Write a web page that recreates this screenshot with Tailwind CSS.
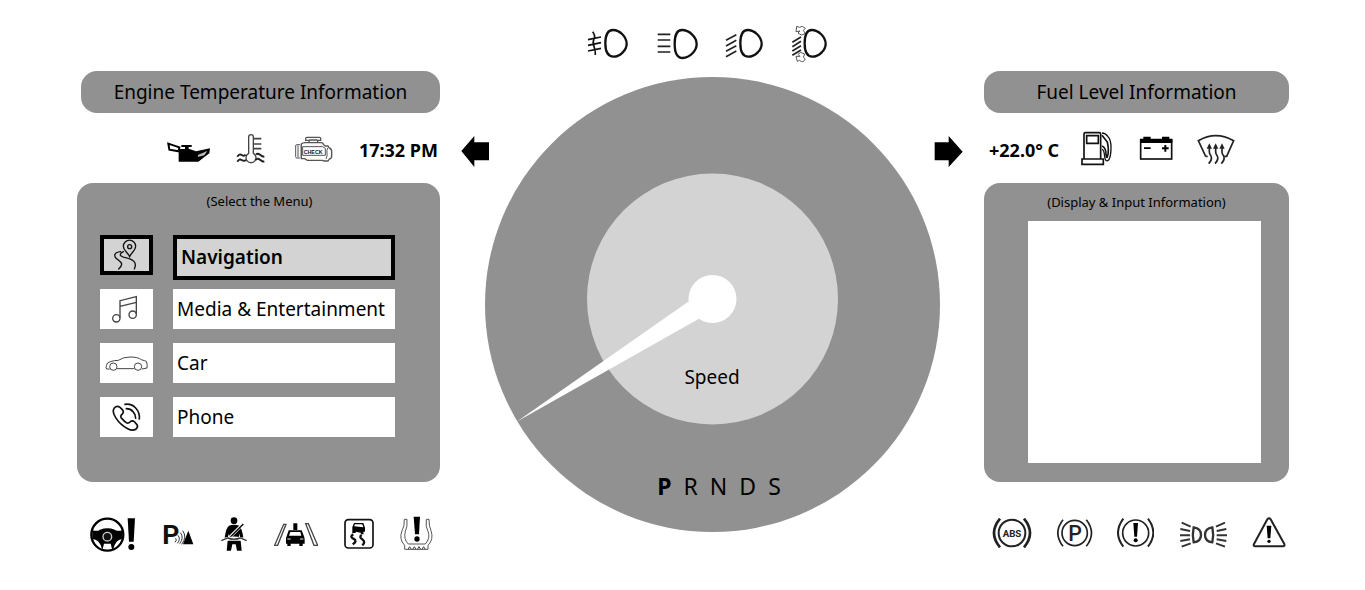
<!DOCTYPE html>
<html lang="en">
<head>
  <meta charset="UTF-8" />
  <meta name="viewport" content="width=device-width, initial-scale=1.0" />
  <title>Instrument Cluster</title>
  <script src="https://cdn.jsdelivr.net/npm/@tailwindcss/browser@4"></script>
</head>
<body class="bg-white text-black font-['Noto_Sans','Open_Sans',sans-serif]">

  <main class="grid grid-cols-[363fr_544fr_305fr] pl-[77px] pr-[76px]">

    <!-- Left: engine info and menu -->
    <section class="pt-[71px]">
      <h2 class="ml-1 h-[42px] rounded-2xl bg-[#919191] flex items-center justify-center text-[19px]">Engine Temperature Information</h2>

      <div class="h-[70px] flex items-center justify-end gap-6 pr-0.5">
        <!-- oil -->
        <svg class="w-11 h-[34px]" viewBox="291 213 132 102">
          <path d="M326 267 H345 V261 H334 V255 H365 V261 H356 V266 L378 274 L420 265 L418 280 L385 305 H326Z" />
          <path d="M295 251 L328 262 L326 274 L298 269Z" fill="#fff" stroke="#000" stroke-width="6" />
          <path d="M385 284 L412 273 L403 286 L383 291Z" fill="#bbb" />
        </svg>
        <!-- coolant -->
        <svg class="w-[35px] h-[34px]" viewBox="495 213 105 102" fill="none" stroke="#444" stroke-width="4">
          <path d="M536 280 V231 a7 7 0 0 1 14 0 V280 a15 15 0 1 1 -14 0Z" />
          <path d="M552 236 h22 M552 252 h22 M552 266 h22" stroke-width="5" />
          <path d="M502 290 q6 -10 13 -5 t12 -1 M502 305 q6 -10 13 -5 t14 0 M558 284 q5 -6 12 0 t13 6 M556 300 q7 -7 14 -1 t13 6" stroke="#222" stroke-width="6" />
        </svg>
        <!-- check engine -->
        <svg class="w-[41px] h-[34px]" viewBox="672 213 123 102" fill="none" stroke="#555" stroke-width="4">
          <path d="M707 235 q0 -3 4 -3 H748 q4 0 4 3 v6 h-9 v7 h-26 v-7 h-10Z M718 240 h24 M694 252 q3 -4 12 -4 H754 q5 0 7 6 l5 4 h8 l4 6 q7 2 7 10 v14 q0 8 -7 9 l-4 6 h-12 l-4 -2 H712 l-8 -5 h-10Z" />
          <path d="M690 254 h-10 q-3 0 -3 4 v32 q0 4 3 4 h10 M684 256 v36 M694 254 v40 M698 260 H758 L766 265 V286 H698Z M774 263 q-5 8 -3 16 q2 8 -3 18" stroke-width="3" />
          <text x="701" y="281" font-size="16" font-weight="700" fill="#111" stroke="none" font-family="Liberation Sans, sans-serif">CHECK</text>
        </svg>
        <p class="pt-1 text-[18px] font-bold">17:32 PM</p>
      </div>

      <nav class="min-h-[299px] rounded-2xl bg-[#919191] pl-[23px] pr-[45px] pt-2">
        <p class="text-[13px] leading-5 text-center pl-6">(Select the Menu)</p>
        <ul class="mt-6 flex flex-col gap-[14px] text-[19px]">
          <li class="h-10">
            <button type="button" class="w-full flex items-start gap-5 text-left font-semibold">
              <span class="w-[53px] h-10 border-4 border-black bg-[#d3d3d3] flex items-center justify-center">
                <svg class="w-8 h-8" viewBox="124 176 96 96" fill="none" stroke="#111" stroke-width="4" stroke-linecap="round">
                  <path d="M180 229 C174 215 161 211 161 198 a18 18 0 0 1 37 0 C198 211 186 215 180 229Z" />
                  <circle cx="180" cy="199" r="6" />
                  <path d="M147 266 C164 250 154 246 142 236 C130 226 134 216 153 214 M161 214 C146 222 150 228 168 232 C192 238 203 246 194 266" />
                </svg>
              </span>
              <span class="flex-1 h-[45px] border-4 border-black bg-[#d3d3d3] flex items-center pl-1">Navigation</span>
            </button>
          </li>
          <li class="h-10">
            <button type="button" class="w-full flex items-start gap-5 text-left">
              <span class="w-[53px] h-10 bg-white flex items-center justify-center">
                <svg class="w-8 h-8" viewBox="122 338 96 96" fill="none" stroke="#444" stroke-width="4">
                  <path d="M149 412 V361 L198 349 V401 M149 378 L198 366" />
                  <circle cx="138" cy="414" r="11" />
                  <circle cx="187" cy="403" r="11" />
                </svg>
              </span>
              <span class="flex-1 h-10 bg-white flex items-center pl-1">Media &amp; Entertainment</span>
            </button>
          </li>
          <li class="h-10">
            <button type="button" class="w-full flex items-start gap-5 text-left">
              <span class="w-[53px] h-10 bg-white flex items-center justify-center">
                <svg class="w-11 h-8" viewBox="105 52 132 96" fill="none" stroke="#444" stroke-width="3">
                  <path d="M119 118 H110 q-3 -4 -1 -10 q1 -10 12 -12 q12 -4 24 -4 q14 -10 35 -10 q24 0 34 8 q10 3 15 5 q4 8 2 20 l-15 3 M141 117 H193" />
                  <circle cx="130" cy="111" r="11" />
                  <circle cx="204" cy="111" r="11" />
                </svg>
              </span>
              <span class="flex-1 h-10 bg-white flex items-center pl-1">Car</span>
            </button>
          </li>
          <li class="h-10">
            <button type="button" class="w-full flex items-start gap-5 text-left">
              <span class="w-[53px] h-10 bg-white flex items-center justify-center">
                <svg class="w-8 h-8" viewBox="121 216 96 96" fill="none" stroke="#111" stroke-width="5" stroke-linecap="round" stroke-linejoin="round">
                  <path d="M131 237 q8 -9 17 -2 l7 7 q6 7 0 13 q-8 6 -2 13 q8 9 14 13 q6 3 11 -2 q7 -7 14 0 l6 7 q6 7 -2 14 q-9 7 -25 -1 q-22 -11 -36 -33 q-12 -19 -4 -29Z" />
                  <path d="M163 226 q19 -3 32 11 q13 14 11 33 M167 239 q13 0 20 9 q8 8 8 20" />
                </svg>
              </span>
              <span class="flex-1 h-10 bg-white flex items-center pl-1">Phone</span>
            </button>
          </li>
        </ul>
      </nav>

      <div class="mt-[31px] flex justify-between pl-[13px] pr-[7px]">
        <!-- steering -->
        <svg class="w-[46px] h-10" viewBox="30 24 138 120">
          <circle cx="82" cy="89" r="48" fill="none" stroke="#000" stroke-width="7" />
          <path d="M37 76 Q52 80 60 74 Q82 66 104 74 Q114 80 127 76 V102 Q108 102 100 132 H66 Q58 102 37 102Z" />
          <path d="M72 116 h20 l4 16 h-28Z" fill="#fff" />
          <circle cx="82" cy="95" r="13" fill="#111" stroke="#ccc" stroke-width="4" />
          <path d="M143 40 H165 L161 110 H147Z" />
          <circle cx="154" cy="126" r="9" />
        </svg>
        <!-- park assist -->
        <svg class="w-8 h-10" viewBox="246 24 96 120" fill="none" stroke="#333" stroke-width="3">
          <text x="247" y="117" font-size="80" font-weight="700" fill="#111" stroke="none" font-family="Liberation Sans Narrow, Roboto, sans-serif">P</text>
          <path d="M287 100 q5 5 -2 12 M294 91 q9 11 -2 24 M301 83 q12 15 -2 33 M308 77 q14 19 -3 41" />
          <path d="M325 77 L340 118 H309Z" fill="#000" stroke="none" />
        </svg>
        <!-- seat belt -->
        <svg class="w-7 h-10" viewBox="417 24 84 120">
          <circle cx="459" cy="47" r="10" />
          <path d="M444 62 Q459 56 475 62 Q483 70 487 98 L478 98 L475 86 L473 104 H445 L443 86 L440 98 L431 98 Q435 68 444 62Z" />
          <path d="M440 107 H479 L482 137 H468 L464 118 H454 L450 137 H437Z" />
          <path d="M486 57 L442 101" stroke="#fff" stroke-width="9" />
          <path d="M487 57 L446 98" stroke="#000" stroke-width="4" />
          <path d="M421 106 Q459 92 497 106" fill="none" stroke="#fff" stroke-width="9" />
          <path d="M421 107 L440 99 Q459 106 478 99 L497 107" fill="none" stroke="#333" stroke-width="4" />
        </svg>
        <!-- lane assist -->
        <svg class="w-11 h-10" viewBox="48 24 132 120">
          <path d="M77 58 h7 L59 121 h-9Z M143 56 h8 L179 121 h-11Z" fill="#fff" stroke="#444" stroke-width="4" />
          <path d="M106 55 h12 v20 h-12Z M92 76 H131 L138 94 Q140 98 140 106 V116 H134 V123 H124 V116 H98 V123 H88 V116 H84 V100Z" />
          <path d="M97 81 H127 L130 92 H93Z" fill="#fff" />
          <path d="M88 100 h10 v4 h-10Z M126 100 h10 v4 h-10Z" fill="#999" />
        </svg>
        <!-- traction -->
        <svg class="w-[30px] h-10" viewBox="255 24 90 120">
          <rect x="258" y="44" width="84" height="85" rx="10" fill="none" stroke="#111" stroke-width="5" />
          <path d="M285 54 H313 L318 68 V80 H313 L314 88 H306 L305 83 L290 80 V84 H280 V66Z" />
          <path d="M287 58 H310 L313 67 L286 64Z" fill="#fff" />
          <path d="M283 88 q-12 6 0 13 q14 7 -2 17 M308 90 q-9 6 2 13 q11 8 0 18" fill="none" stroke="#111" stroke-width="7" />
        </svg>
        <!-- tyre pressure -->
        <svg class="w-[33px] h-10" viewBox="420 24 99 120">
          <path d="M433 43 h8 q2 24 -5 36 q-6 24 9 38 H496 q16 -18 8 -38 q-8 -12 -5 -36 h8 q0 22 6 34 q9 26 -9 44 V133 H434 V121 q-18 -18 -8 -44 q8 -12 7 -34Z" fill="none" stroke="#555" stroke-width="3" />
          <path d="M444 133 l5 -8 l5 8 M458 133 l5 -8 l5 8 M472 133 l5 -8 l5 8 M486 133 l5 -8 l5 8" fill="none" stroke="#444" stroke-width="3" />
          <path d="M461 35 H480 L477 88 H465Z" />
          <circle cx="471" cy="102" r="8" />
        </svg>
      </div>
    </section>

    <!-- Centre: lamps, indicators, speed dial -->
    <section class="pt-[25px]">
      <div class="flex justify-center gap-[27px] pr-[10px]">
        <svg class="w-[42px] h-10" viewBox="54 30 126 120" fill="none" stroke="#111" stroke-width="7">
          <path d="M132 45 C117 45 109 59 109 85 C109 112 118 125 134 125 C153 125 173 105 173 87 C173 65 152 45 132 45Z" />
          <path d="M57 74 L96 66 M57 91 L96 83 M57 108 L96 100 M71 50 Q80 62 75 72 T75 94 T79 120" stroke-width="5" />
        </svg>
        <svg class="w-[42px] h-10" viewBox="255 30 126 120" fill="none" stroke="#111" stroke-width="7">
          <path d="M333 45 C319 45 311 59 311 86 C311 115 320 129 335 129 C356 129 377 107 377 88 C377 65 354 45 333 45Z" />
          <path d="M260 58 H298 M260 75 H298 M260 94 H298 M260 111 H298" stroke="#222" stroke-width="5" />
        </svg>
        <svg class="w-[38px] h-10" viewBox="462 30 114 120" fill="none" stroke="#111" stroke-width="7">
          <path d="M530 45 C516 45 508 59 508 85 C508 112 517 125 532 125 C552 125 572 105 572 87 C572 65 550 45 530 45Z" />
          <path d="M465 76 L496 59 M465 93 L496 76 M465 109 L496 92 M465 125 L496 108" stroke="#222" stroke-width="5" />
        </svg>
        <svg class="w-[38px] h-10" viewBox="660 30 114 120" fill="none" stroke="#111" stroke-width="7">
          <path d="M667 82 L693 66 M667 95 L693 79 M667 108 L693 92 M667 121 L693 105" stroke="#222" stroke-width="5" />
          <path d="M678 50 L680 34 L688 37 Q697 30 706 40 L700 46 L706 56 L694 60 L684 54 L690 48Z M678 124 L682 139 L689 136 Q699 146 706 132 L700 127 L704 117 L692 112 L684 118 L690 124Z" fill="#fff" stroke="#555" stroke-width="3" />
          <path d="M725 45 C711 45 704 59 704 85 C704 112 712 125 727 125 C747 125 767 105 767 87 C767 65 745 45 725 45Z" />
        </svg>
      </div>

      <div class="mt-3 grid justify-items-center">
        <svg class="[grid-area:1/1] w-[455px]" viewBox="0 0 455 455">
          <circle cx="227.5" cy="227.5" r="227.5" fill="#919191" />
          <circle cx="227.5" cy="222" r="125.5" fill="#d3d3d3" />
          <path d="M32 344.5 L203.5 224.5 L227 222 L213.5 242Z" fill="#fff" />
          <circle cx="227.5" cy="222" r="24" fill="#fff" />
        </svg>
        <div class="[grid-area:1/1] self-end flex flex-col items-center pb-7">
          <p class="text-[19px] leading-7">Speed</p>
          <p class="mt-[77px] ml-[14px] flex gap-3 text-[23px] leading-9"><b>P</b><span>R</span><span>N</span><span>D</span><span>S</span></p>
        </div>
        <div class="[grid-area:1/1] w-full self-start mt-[57px] px-5 flex justify-between">
          <svg class="w-[30px] h-[34px]" viewBox="1170 222 90 102"><path d="M1174 273 L1213 228 V247 H1257 V301 H1213 V321Z" /></svg>
          <svg class="w-[30px] h-[34px]" viewBox="42 222 90 102"><path d="M44 247 H86 V228 L128 275 L86 321 V301 H44Z" /></svg>
        </div>
      </div>
    </section>

    <!-- Right: fuel info and display -->
    <section class="pt-[71px]">
      <h2 class="h-[42px] rounded-2xl bg-[#919191] flex items-center justify-center text-[19px]">Fuel Level Information</h2>

      <div class="h-[70px] flex items-center gap-[18px] pl-[5px]">
        <p class="min-w-[74px] pt-1 text-[18px] font-bold">+22.0° C</p>
        <!-- fuel -->
        <svg class="w-[39px] h-9" viewBox="483 210 117 108" fill="none" stroke="#111" stroke-width="5">
          <path d="M492 296 V222 Q492 218 497 218 H538 Q542 218 542 222 V296 M500 227 H535 V250 H500Z M486 297 H550 V313 H486Z" />
          <path d="M546 219 Q556 219 564 230 Q573 238 573 262 Q573 290 566 300 Q556 308 554 290 Q552 268 546 268" stroke-width="4" />
          <path d="M546 226 L562 246 Q568 274 562 290 Q560 296 558 284 Q558 262 546 258" />
        </svg>
        <!-- battery -->
        <svg class="w-[39px] h-9" viewBox="654 210 117 108">
          <rect x="662" y="240" width="93" height="57" fill="none" stroke="#111" stroke-width="5" />
          <path d="M660 236 H670 V230 H692 V236 H726 V230 H748 V236 H757 V249 H660Z M672 262 H692 V267 H672Z M726 262 H733 V255 H739 V262 H746 V268 H739 V275 H733 V268 H726Z" />
        </svg>
        <!-- defrost -->
        <svg class="w-[41px] h-9" viewBox="825 210 123 108" fill="none" stroke="#222" stroke-width="5">
          <path d="M857 289 L835 242 Q887 212 941 242 L920 289 H913 M857 289 H863" />
          <path d="M868 257 V276 Q868 282 873 288 Q878 298 866 311 M887 257 V276 Q887 282 892 288 Q897 298 885 311 M906 257 V276 Q906 282 911 288 Q916 298 904 311" />
          <path d="M860 266 L868 250 L876 266Z M879 266 L887 250 L895 266Z M898 266 L906 250 L914 266Z" fill="#222" stroke="none" />
        </svg>
      </div>

      <div class="min-h-[299px] rounded-2xl bg-[#919191] pt-[9px]">
        <label for="display" class="block text-[13px] leading-5 text-center">(Display &amp; Input Information)</label>
        <div class="mt-[9px] pl-11 pr-7">
          <textarea id="display" class="block w-full h-[242px] bg-white resize-none p-2 outline-none"></textarea>
        </div>
      </div>

      <div class="mt-[31px] flex justify-between pl-2 pr-[3px]">
        <!-- abs -->
        <svg class="w-10 h-10" viewBox="36 24 120 120" fill="none" stroke="#222" stroke-width="6">
          <circle cx="96" cy="84" r="40" />
          <path d="M60 41 Q24 84 60 127 M132 41 Q168 84 132 127" stroke-width="8" />
          <text x="96" y="95" text-anchor="middle" font-size="29" font-weight="700" fill="#222" stroke="none" font-family="Roboto, sans-serif">ABS</text>
        </svg>
        <!-- parking brake -->
        <svg class="w-9 h-10" viewBox="228 24 108 120" fill="none" stroke="#222" stroke-width="5">
          <circle cx="281" cy="84" r="38" />
          <path d="M246 44 Q215 84 246 124 M316 44 Q347 84 316 124" />
          <text x="282" y="108" text-anchor="middle" font-size="64" font-weight="500" fill="#222" stroke="none" font-family="Roboto, sans-serif">P</text>
        </svg>
        <!-- brake warning -->
        <svg class="w-[37px] h-10" viewBox="414 24 111 120" fill="none" stroke="#222" stroke-width="5">
          <circle cx="470" cy="84" r="39" />
          <path d="M433 41 Q401 84 433 125 M507 41 Q539 84 507 125" stroke-width="6" />
          <path d="M463 54 H477 L474 95 H466Z" fill="#000" stroke="none" />
          <circle cx="470" cy="106" r="6" fill="#000" stroke="none" />
        </svg>
        <!-- side lights -->
        <svg class="w-[49px] h-10" viewBox="126 24 147 120" fill="none" stroke="#333" stroke-width="7">
          <path d="M170 67 Q192 70 192 90 Q192 110 170 112 Q165 90 170 67Z M226 67 Q204 70 204 90 Q204 110 226 112 Q231 90 226 67Z" />
          <path d="M134 53 L161 65 M130 72 L159 78 M129 91 H159 M130 108 L159 103 M134 125 L161 115 M264 53 L237 65 M268 72 L239 78 M270 91 H239 M268 108 L239 103 M264 125 L237 115" stroke-width="6" />
        </svg>
        <!-- warning triangle -->
        <svg class="w-[34px] h-10" viewBox="336 24 102 120">
          <path d="M382 43 Q387 37 392 43 L433 117 Q435 124 429 124 H346 Q339 124 342 117Z" fill="none" stroke="#222" stroke-width="6" stroke-linejoin="round" />
          <path d="M380 62 H394 L391 100 H383Z" />
          <circle cx="387" cy="109" r="5" />
        </svg>
      </div>
    </section>
  </main>
</body>
</html>
